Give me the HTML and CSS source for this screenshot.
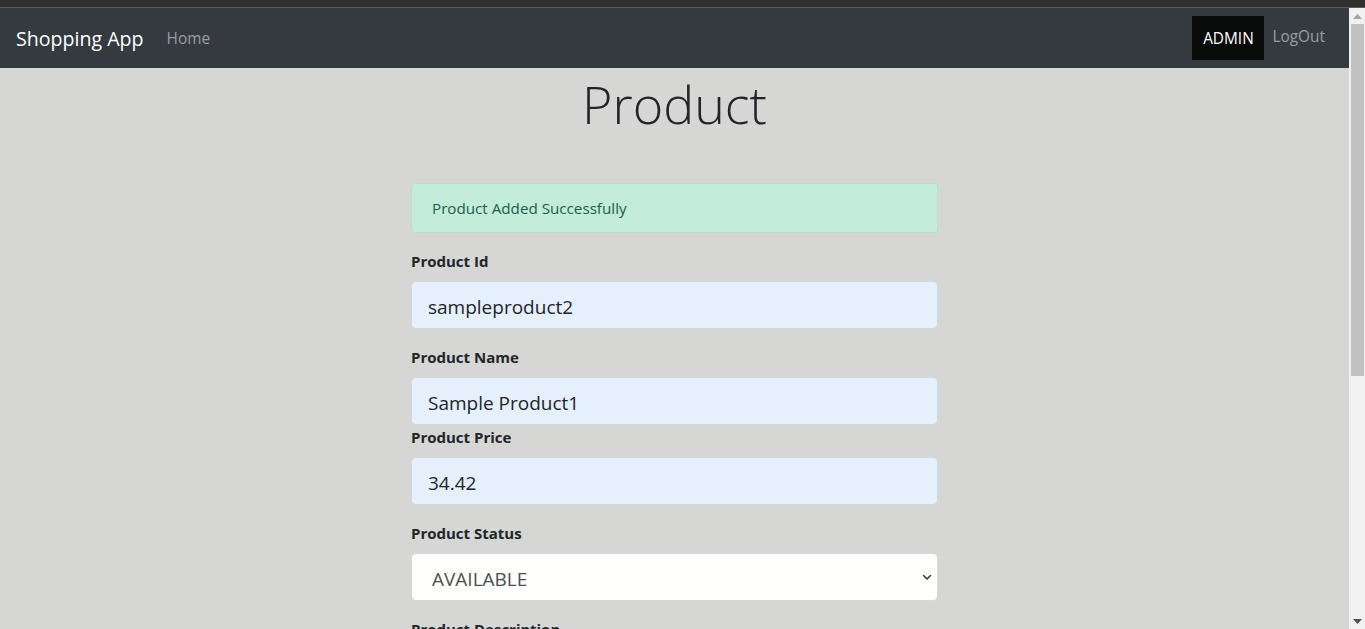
FILE: index.html
```html
<!DOCTYPE html>
<html lang="en">
<head>
<meta charset="utf-8">
<title>Shopping App</title>
<link rel="stylesheet" href="styles.css">
</head>
<body>
<div class="chrome"></div>
<div class="window">
  <div class="viewport">
    <nav class="navbar">
      <a class="brand" href="#">Shopping App</a>
      <a class="nav-link home" href="#">Home</a>
      <div class="nav-right">
        <span class="admin">ADMIN</span>
        <a class="nav-link logout" href="#">LogOut</a>
      </div>
    </nav>
    <main class="content">
      <h1 class="title">Product</h1>
      <form class="product-form">
        <div class="alert">Product Added Successfully</div>
        <div class="group">
          <label class="label">Product Id</label>
          <input class="control filled" type="text" value="sampleproduct2">
        </div>
        <div class="group tight">
          <label class="label">Product Name</label>
          <input class="control filled" type="text" value="Sample Product1">
        </div>
        <div class="group">
          <label class="label">Product Price</label>
          <input class="control filled" type="text" value="34.42">
        </div>
        <div class="group">
          <label class="label">Product Status</label>
          <div class="select-wrap">
            <select class="control select">
              <option>AVAILABLE</option>
              <option>NOT AVAILABLE</option>
            </select>
            <svg class="chevron" width="10" height="7" viewBox="0 0 10 7"><path d="M1.5 1.5 L5 5 L8.5 1.5" fill="none" stroke="#343a40" stroke-width="1.6" stroke-linecap="round" stroke-linejoin="round"/></svg>
          </div>
        </div>
        <div class="group">
          <label class="label">Product Description</label>
        </div>
      </form>
    </main>
  </div>
  <div class="scrollbar">
    <div class="arrow up"><svg width="9" height="5" viewBox="0 0 9 5"><path d="M0 5 L4.5 0 L9 5 Z" fill="#a3a3a3"/></svg></div>
    <div class="thumb"></div>
    <div class="track"></div>
    <div class="arrow down"><svg width="9" height="5" viewBox="0 0 9 5"><path d="M0 0 L4.5 5 L9 0 Z" fill="#505050"/></svg></div>
  </div>
</div>
</body>
</html>
```

FILE: styles.css
```css
* { box-sizing: border-box; }
html, body { margin: 0; padding: 0; }
body {
  font-family: "Open Sans", "Noto Sans", sans-serif;
  font-size: 16px;
  line-height: 1.5;
  color: #212529;
  background: #d6d6d4;
  overflow: hidden;
}
.chrome {
  height: 8px;
  background: #302f2d;
  border-bottom: 1px solid #5e5e5e;
}
.window {
  display: flex;
  height: 621px;
}
.viewport {
  flex: 1;
  overflow: hidden;
  background: #d6d6d4;
}
.navbar {
  display: flex;
  align-items: stretch;
  height: 60px;
  padding: 8px 16px;
  background: #343a40;
}
.brand {
  display: flex;
  align-items: center;
  font-size: 19.6px;
  color: #fff;
  text-decoration: none;
  margin-right: 15px;
  padding-top: 2px;
}
.nav-link {
  display: flex;
  align-items: center;
  padding: 0 8px;
  font-size: 15.4px;
  color: #9a9ea2;
  text-decoration: none;
}
.home { padding-top: 1px; }
.nav-right {
  margin-left: auto;
  display: flex;
  align-items: stretch;
}
.admin {
  display: flex;
  align-items: center;
  width: 72px;
  justify-content: center;
  background: #0a0c0c;
  color: #fff;
  font-size: 15.4px;
  padding-top: 2px;
}
.logout { padding-bottom: 2px; }
.content {
  display: flex;
  flex-direction: column;
  align-items: center;
}
.title {
  margin: 5px 0 48px;
  font-size: 52px;
  font-weight: 300;
  line-height: 1.2;
  color: #212529;
}
.product-form {
  width: 527px;
}
.alert {
  height: 50px;
  padding: 12px 20px;
  margin-bottom: 16px;
  background: #c3ecdb;
  border: 1px solid #b2e2cc;
  border-radius: 4px;
  color: #18634a;
  font-size: 15.2px;
  line-height: 25px;
}
.group { margin-bottom: 16px; }
.group.tight { margin-bottom: 0; }
.label {
  display: block;
  margin-bottom: 8px;
  font-weight: 700;
  font-size: 15px;
  line-height: 24px;
  color: #212529;
}
.control {
  display: block;
  width: 100%;
  height: 48px;
  padding: 4px 16px 0 16px;
  font-family: inherit;
  font-size: 19px;
  color: #212529;
  border: 1px solid #d3d9e0;
  border-radius: 5px;
  outline: none;
}
.filled { background: #e6effc; }
.select-wrap { position: relative; }
.select {
  appearance: none;
  -webkit-appearance: none;
  background: #fefefb;
  padding-left: 20px;
  color: #495057;
}
.chevron {
  position: absolute;
  right: 6px;
  top: 21px;
}
.scrollbar {
  width: 16px;
  background: #f1f1f1;
  display: flex;
  flex-direction: column;
}
.arrow {
  height: 16px;
  display: flex;
  align-items: center;
  justify-content: center;
}
.thumb {
  height: 352px;
  margin: 0 1px 0 2px;
  background: #c1c1c1;
}
.track { flex: 1; }
```
